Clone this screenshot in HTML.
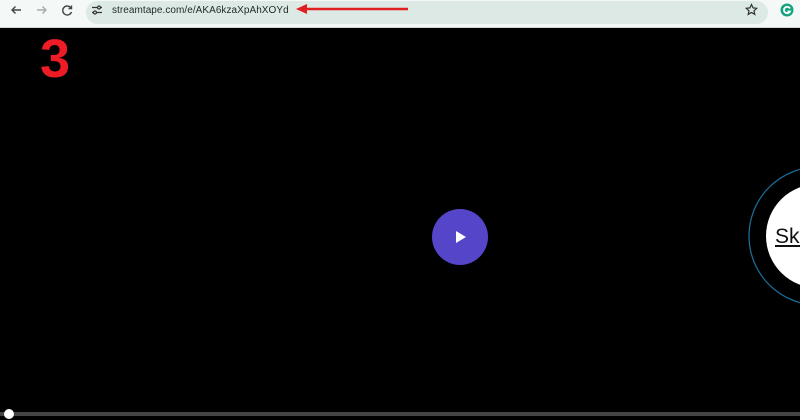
<!DOCTYPE html>
<html><head><style>
body{margin:0;width:800px;height:420px;overflow:hidden;background:#000;font-family:"Liberation Sans",sans-serif;position:relative}
.top{position:absolute;left:0;top:0;width:800px;height:28px;background:#f4f8f7;border-bottom:1px solid #cfd8d6;box-sizing:border-box}
.omni{position:absolute;left:86px;top:1px;width:682px;height:23px;border-radius:12px;background:#dde9e5}
.url{position:absolute;left:112px;top:5px;font-size:10px;letter-spacing:0.05px;color:#1f2a28}
</style></head><body>
<div class="top">
<svg width="800" height="28" style="position:absolute;left:0;top:0">
<path d="M21 10H12M15.5 6.5L12 10L15.5 13.5" stroke="#444" stroke-width="1.4" fill="none"/>
<path d="M37 10H46M42.5 6.5L46 10L42.5 13.5" stroke="#aaa" stroke-width="1.4" fill="none"/>
<path d="M71 8A4.5 4.5 0 1 0 71.5 12M71.5 5.5V8.5H68.5" stroke="#444" stroke-width="1.4" fill="none"/>
</svg>
<div class="omni"></div>
<svg width="800" height="28" style="position:absolute;left:0;top:0">
<path d="M92 7.5H98M100 7.5h2M92 12.5h2M96 12.5h6" stroke="#333" stroke-width="1.3"/>
<circle cx="99" cy="7.5" r="1.5" fill="none" stroke="#333" stroke-width="1.2"/>
<circle cx="95" cy="12.5" r="1.5" fill="none" stroke="#333" stroke-width="1.2"/>
<path d="M408 9H302" stroke="#e02020" stroke-width="2.5"/>
<path d="M296 9L307 4V14Z" fill="#e02020"/>
<path d="M751.5 4.5l1.6 3.4 3.6.4-2.7 2.5.8 3.6-3.3-1.9-3.3 1.9.8-3.6-2.7-2.5 3.6-.4z" fill="none" stroke="#333" stroke-width="1.2"/>
<circle cx="787" cy="10" r="6.5" fill="#15a37f"/>
<path d="M790 8.5A3.2 3.2 0 1 0 790 11.5H787.5" stroke="#fff" stroke-width="1.8" fill="none"/>
</svg>
<div class="url">streamtape.com/e/AKA6kzaXpAhXOYd</div>
</div>
<div style="position:absolute;left:40px;top:28px;font-size:54px;font-weight:bold;color:#ee1c25">3</div>
<div style="position:absolute;left:432px;top:209px;width:56px;height:56px;border-radius:50%;background:#5546c9"></div>
<svg width="800" height="420" style="position:absolute;left:0;top:0">
<path d="M456 231V243L466 237Z" fill="#fff"/>
<circle cx="818" cy="236" r="69" fill="none" stroke="#1a6a96" stroke-width="1.3"/>
<circle cx="818" cy="236" r="52" fill="#fff"/>
<rect x="0" y="412" width="800" height="4" fill="#444"/>
<circle cx="9" cy="414" r="5" fill="#fff"/>
</svg>
<div style="position:absolute;left:775px;top:225px;font-size:21px;color:#111;text-decoration:underline">Skip</div>
</body></html>
